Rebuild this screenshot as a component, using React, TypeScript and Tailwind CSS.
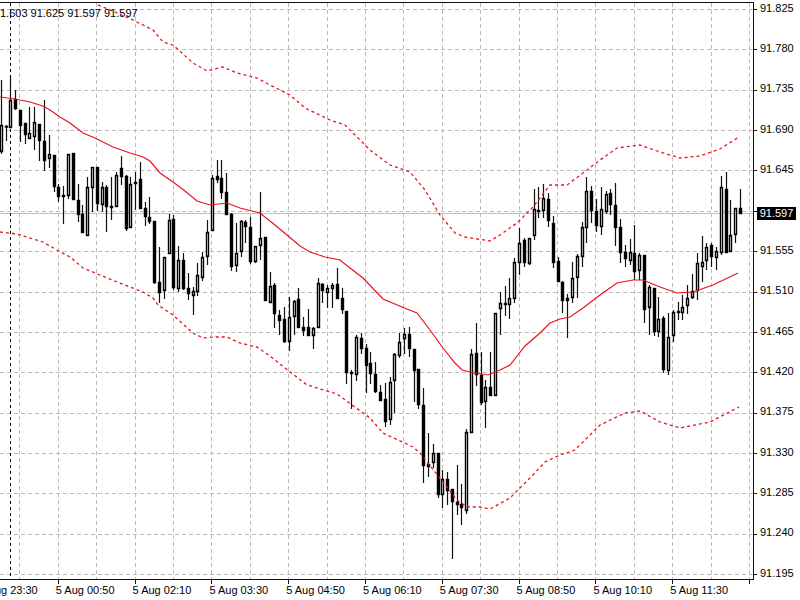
// the 91.600 label sits under the current price box, so its slot stays empty
const prices = ['91.825', '91.780', '91.735', '91.690', '91.645', '', '91.555', '91.510', '91.465', '91.420', '91.375', '91.330', '91.285', '91.240', '91.195'];
const times = ['5 Aug 23:30', '5 Aug 00:50', '5 Aug 02:10', '5 Aug 03:30', '5 Aug 04:50', '5 Aug 06:10', '5 Aug 07:30', '5 Aug 08:50', '5 Aug 10:10', '5 Aug 11:30'];

// high, low, body top, body bottom, bull (pixel rows, left to right, one bar every 4.8px)
const bars: number[][] = [
  [80, 154, 125, 152, 1], [125, 141, 126, 127, 0], [75, 128, 100, 128, 1], [90, 110, 99, 109, 0], [110, 142, 110, 126, 0],
  [123, 144, 123, 135, 0], [107, 139, 133, 139, 1], [107, 150, 122, 137, 1], [124, 161, 124, 141, 0], [100, 171, 141, 161, 0],
  [135, 168, 154, 159, 1], [155, 192, 155, 187, 0], [184, 202, 187, 197, 0], [186, 224, 195, 197, 0], [154, 199, 154, 196, 1],
  [153, 200, 153, 200, 0], [184, 222, 200, 215, 0], [205, 233, 214, 233, 0], [177, 236, 187, 236, 1], [167, 212, 167, 188, 1],
  [167, 211, 167, 204, 0], [182, 212, 187, 205, 1], [185, 232, 187, 207, 0], [177, 220, 206, 208, 0], [172, 207, 175, 207, 1],
  [156, 185, 168, 177, 0], [175, 231, 176, 229, 0], [177, 228, 184, 228, 1], [172, 210, 182, 184, 1], [162, 209, 179, 209, 0],
  [202, 226, 208, 217, 0], [197, 224, 217, 222, 0], [221, 284, 221, 283, 0], [247, 303, 282, 293, 0], [257, 299, 257, 291, 1],
  [214, 254, 220, 254, 1], [215, 290, 219, 288, 0], [246, 292, 260, 289, 1], [253, 290, 260, 289, 0], [273, 300, 288, 294, 0],
  [287, 315, 291, 296, 1], [263, 296, 275, 292, 1], [252, 281, 257, 278, 1], [220, 265, 232, 257, 1], [175, 231, 178, 231, 1],
  [160, 183, 176, 180, 0], [160, 199, 178, 193, 0], [173, 215, 192, 215, 0], [213, 271, 214, 267, 0], [223, 272, 253, 266, 1],
  [220, 257, 221, 252, 1], [220, 243, 222, 227, 0], [217, 264, 227, 262, 0], [246, 263, 246, 262, 1], [192, 260, 238, 246, 1],
  [237, 301, 237, 301, 0], [272, 303, 286, 303, 1], [283, 328, 285, 314, 0], [310, 335, 315, 321, 0], [307, 343, 319, 342, 0],
  [297, 351, 317, 342, 1], [300, 335, 301, 317, 1], [288, 328, 299, 328, 0], [317, 336, 327, 331, 0], [309, 336, 327, 336, 0],
  [327, 349, 328, 336, 1], [278, 328, 283, 328, 1], [283, 303, 284, 291, 0], [285, 308, 288, 293, 1], [283, 308, 285, 289, 1],
  [268, 299, 284, 299, 0], [288, 314, 298, 310, 0], [311, 384, 311, 373, 0], [370, 409, 372, 374, 0], [335, 381, 337, 375, 1],
  [333, 354, 338, 349, 0], [344, 393, 348, 366, 0], [352, 384, 363, 374, 0], [362, 393, 374, 392, 0], [385, 401, 392, 401, 0],
  [383, 427, 399, 422, 0], [377, 425, 382, 420, 1], [353, 413, 354, 381, 1], [333, 358, 342, 356, 1], [328, 354, 334, 339, 1],
  [327, 357, 334, 349, 0], [349, 402, 349, 371, 0], [369, 409, 369, 405, 0], [388, 483, 405, 466, 0], [433, 477, 464, 467, 1],
  [444, 468, 453, 463, 1], [453, 498, 453, 495, 0], [470, 508, 479, 495, 1], [472, 505, 479, 491, 0], [489, 559, 489, 502, 0],
  [465, 515, 502, 505, 0], [484, 525, 504, 508, 0], [429, 514, 432, 511, 1], [349, 433, 354, 433, 1], [323, 386, 353, 375, 0],
  [352, 405, 375, 403, 0], [380, 428, 387, 402, 1], [352, 396, 387, 396, 0], [313, 396, 313, 396, 1], [292, 335, 303, 309, 1],
  [286, 316, 303, 305, 0], [278, 319, 298, 305, 1], [258, 303, 262, 299, 1], [228, 275, 243, 263, 1], [238, 267, 240, 263, 0],
  [238, 265, 238, 264, 1], [189, 240, 209, 236, 1], [187, 218, 210, 212, 0], [184, 218, 198, 211, 1], [193, 227, 199, 221, 0],
  [216, 268, 223, 263, 0], [257, 282, 261, 282, 0], [281, 313, 282, 301, 0], [294, 338, 298, 301, 0], [262, 303, 278, 298, 1],
  [254, 298, 256, 278, 1], [222, 267, 227, 257, 1], [177, 243, 191, 228, 1], [186, 223, 191, 211, 0], [199, 232, 211, 226, 0],
  [187, 235, 209, 227, 1], [191, 214, 194, 212, 1], [189, 215, 193, 205, 0], [183, 246, 205, 228, 0], [219, 263, 227, 253, 0],
  [245, 267, 252, 259, 0], [239, 265, 252, 261, 1], [225, 280, 253, 272, 0], [253, 280, 255, 271, 1], [255, 323, 255, 310, 0],
  [285, 335, 287, 308, 1], [288, 336, 288, 332, 0], [297, 337, 319, 332, 1], [316, 373, 318, 370, 0], [313, 375, 337, 371, 1],
  [310, 342, 312, 336, 1], [302, 320, 311, 313, 0], [295, 320, 307, 313, 1], [285, 314, 298, 306, 1], [274, 299, 291, 298, 1],
  [253, 300, 263, 291, 1], [236, 282, 262, 267, 1], [243, 270, 247, 261, 1], [243, 267, 245, 257, 0], [247, 270, 251, 258, 1],
  [176, 255, 187, 253, 1], [172, 253, 189, 253, 0], [200, 252, 235, 252, 1], [208, 243, 208, 235, 1], [189, 214, 208, 214, 0],
];

const ma = [[0, 97], [15, 99], [30, 102], [43, 106], [50, 110], [60, 117], [70, 123], [83, 133], [95, 138], [113, 147], [130, 153], [143, 157], [150, 161], [160, 173], [173, 182], [185, 191], [197, 201], [210, 205], [227, 203], [240, 208], [260, 213], [275, 225], [287, 235], [300, 246], [310, 252], [325, 257], [340, 260], [350, 268], [363, 278], [383, 299], [402, 307], [417, 313], [430, 330], [443, 348], [455, 363], [462, 370], [470, 372], [488, 375], [500, 370], [510, 365], [525, 346], [540, 333], [550, 323], [560, 319], [570, 317], [583, 308], [600, 295], [617, 283], [633, 280], [643, 280], [660, 287], [677, 293], [693, 292], [713, 285], [738, 273]];
const upper = [[98, 5], [115, 12], [133, 20], [153, 30], [163, 42], [173, 45], [193, 63], [207, 71], [223, 67], [237, 73], [257, 78], [270, 85], [290, 95], [305, 108], [330, 120], [345, 125], [370, 150], [390, 165], [410, 172], [425, 190], [440, 215], [455, 233], [465, 237], [490, 241], [500, 235], [517, 223], [533, 207], [550, 185], [567, 185], [583, 173], [600, 160], [617, 148], [640, 145], [660, 152], [680, 158], [700, 156], [720, 149], [739, 137]];
const lower = [[0, 232], [17, 234], [43, 242], [57, 250], [70, 257], [83, 268], [100, 275], [117, 282], [143, 292], [153, 298], [158, 305], [173, 315], [193, 333], [203, 338], [213, 337], [227, 337], [240, 343], [257, 347], [270, 356], [285, 368], [307, 385], [337, 394], [352, 405], [370, 418], [383, 433], [413, 447], [420, 453], [443, 482], [457, 500], [467, 507], [480, 507], [490, 509], [510, 498], [530, 478], [545, 462], [560, 455], [575, 450], [600, 425], [625, 413], [640, 411], [660, 422], [680, 428], [710, 422], [739, 407]];

const toPoints = (pts: number[][]) => pts.map(p => p.join(',')).join(' ');
const gridY = prices.map((_, i) => Math.round(9 + i * 40.36) + 0.5);
const gridX = Array.from({ length: 20 }, (_, i) => Math.round(749 - i * 38.4) + 0.5);
const tickX = Array.from({ length: 10 }, (_, i) => Math.round(749 - i * 76.8) + 0.5);

function Chart() {
  return (
    <svg width="754" height="580" className="block overflow-visible blur-[0.35px]">
      {gridY.map(y => (
        <line key={y} x1="0" x2="753" y1={y} y2={y} stroke="#bcbcbc" strokeDasharray="4 3" />
      ))}
      {gridX.map(x => (
        <line key={x} x1={x} x2={x} y1="3" y2="579" stroke="#bcbcbc" strokeDasharray="4 3" />
      ))}
      <line x1="0" x2="753" y1="213.5" y2="213.5" stroke="#c0c0c0" />
      <line x1="10.5" x2="10.5" y1="3" y2="579" stroke="#000" strokeDasharray="3 3" />

      {bars.map(([h, l, t, b, bull], i) => {
        const x = Math.round(0.7 + i * 4.8) + 0.5;
        return (
          <g key={i}>
            <line x1={x} x2={x} y1={h} y2={l} stroke="#111" strokeWidth="1.2" />
            <rect
              x={x - 1}
              y={t + 0.5}
              width="2"
              height={Math.max(b - t - 1, 0.5)}
              fill={bull ? '#fff' : '#000'}
              stroke="#000"
              strokeWidth="1.4"
            />
          </g>
        );
      })}

      <polyline points={toPoints(ma)} fill="none" stroke="#e8141e" strokeWidth="1.2" />
      <polyline points={toPoints(upper)} fill="none" stroke="#e8141e" strokeWidth="1.3" strokeDasharray="3 3" />
      <polyline points={toPoints(lower)} fill="none" stroke="#e8141e" strokeWidth="1.3" strokeDasharray="3 3" />

      {/* frame and axis ticks */}
      <line x1="0" x2="753" y1="2.5" y2="2.5" stroke="#111" />
      <line x1="753.5" x2="753.5" y1="2" y2="580" stroke="#111" />
      <line x1="0" x2="754" y1="579.5" y2="579.5" stroke="#111" />
      {gridY.map(y => (
        <line key={y} x1="754" x2="757" y1={y} y2={y} stroke="#111" />
      ))}
      {tickX.map(x => (
        <line key={x} x1={x} x2={x} y1="580" y2="584" stroke="#111" />
      ))}
    </svg>
  );
}

export default function App() {
  return (
    <div className="relative w-[800px] h-[600px] overflow-hidden bg-white text-black text-[11px] leading-none [font-family:'Liberation_Sans',sans-serif]">
      <div className="flex h-[580px]">
        <div className="relative w-[754px] h-[580px]">
          <Chart />
          <div className="absolute left-0 top-[8px] whitespace-nowrap">1.603 91.625 91.597 91.597</div>
        </div>
        <div className="relative flex-1 pl-[6px]">
          <div className="flex flex-col">
            {prices.map((p, i) => (
              <div key={i} className="flex items-center h-[40.36px] -translate-y-[12px]">{p}</div>
            ))}
          </div>
          <div className="absolute left-[3px] top-[207px] w-[39px] h-[13px] flex items-center justify-center bg-black text-white">91.597</div>
        </div>
      </div>
      <div className="flex -ml-[21px] mt-[5px]">
        {times.map((t, i) => (
          <div key={i} className="w-[76.8px] shrink-0 whitespace-nowrap">{t}</div>
        ))}
      </div>
    </div>
  );
}
